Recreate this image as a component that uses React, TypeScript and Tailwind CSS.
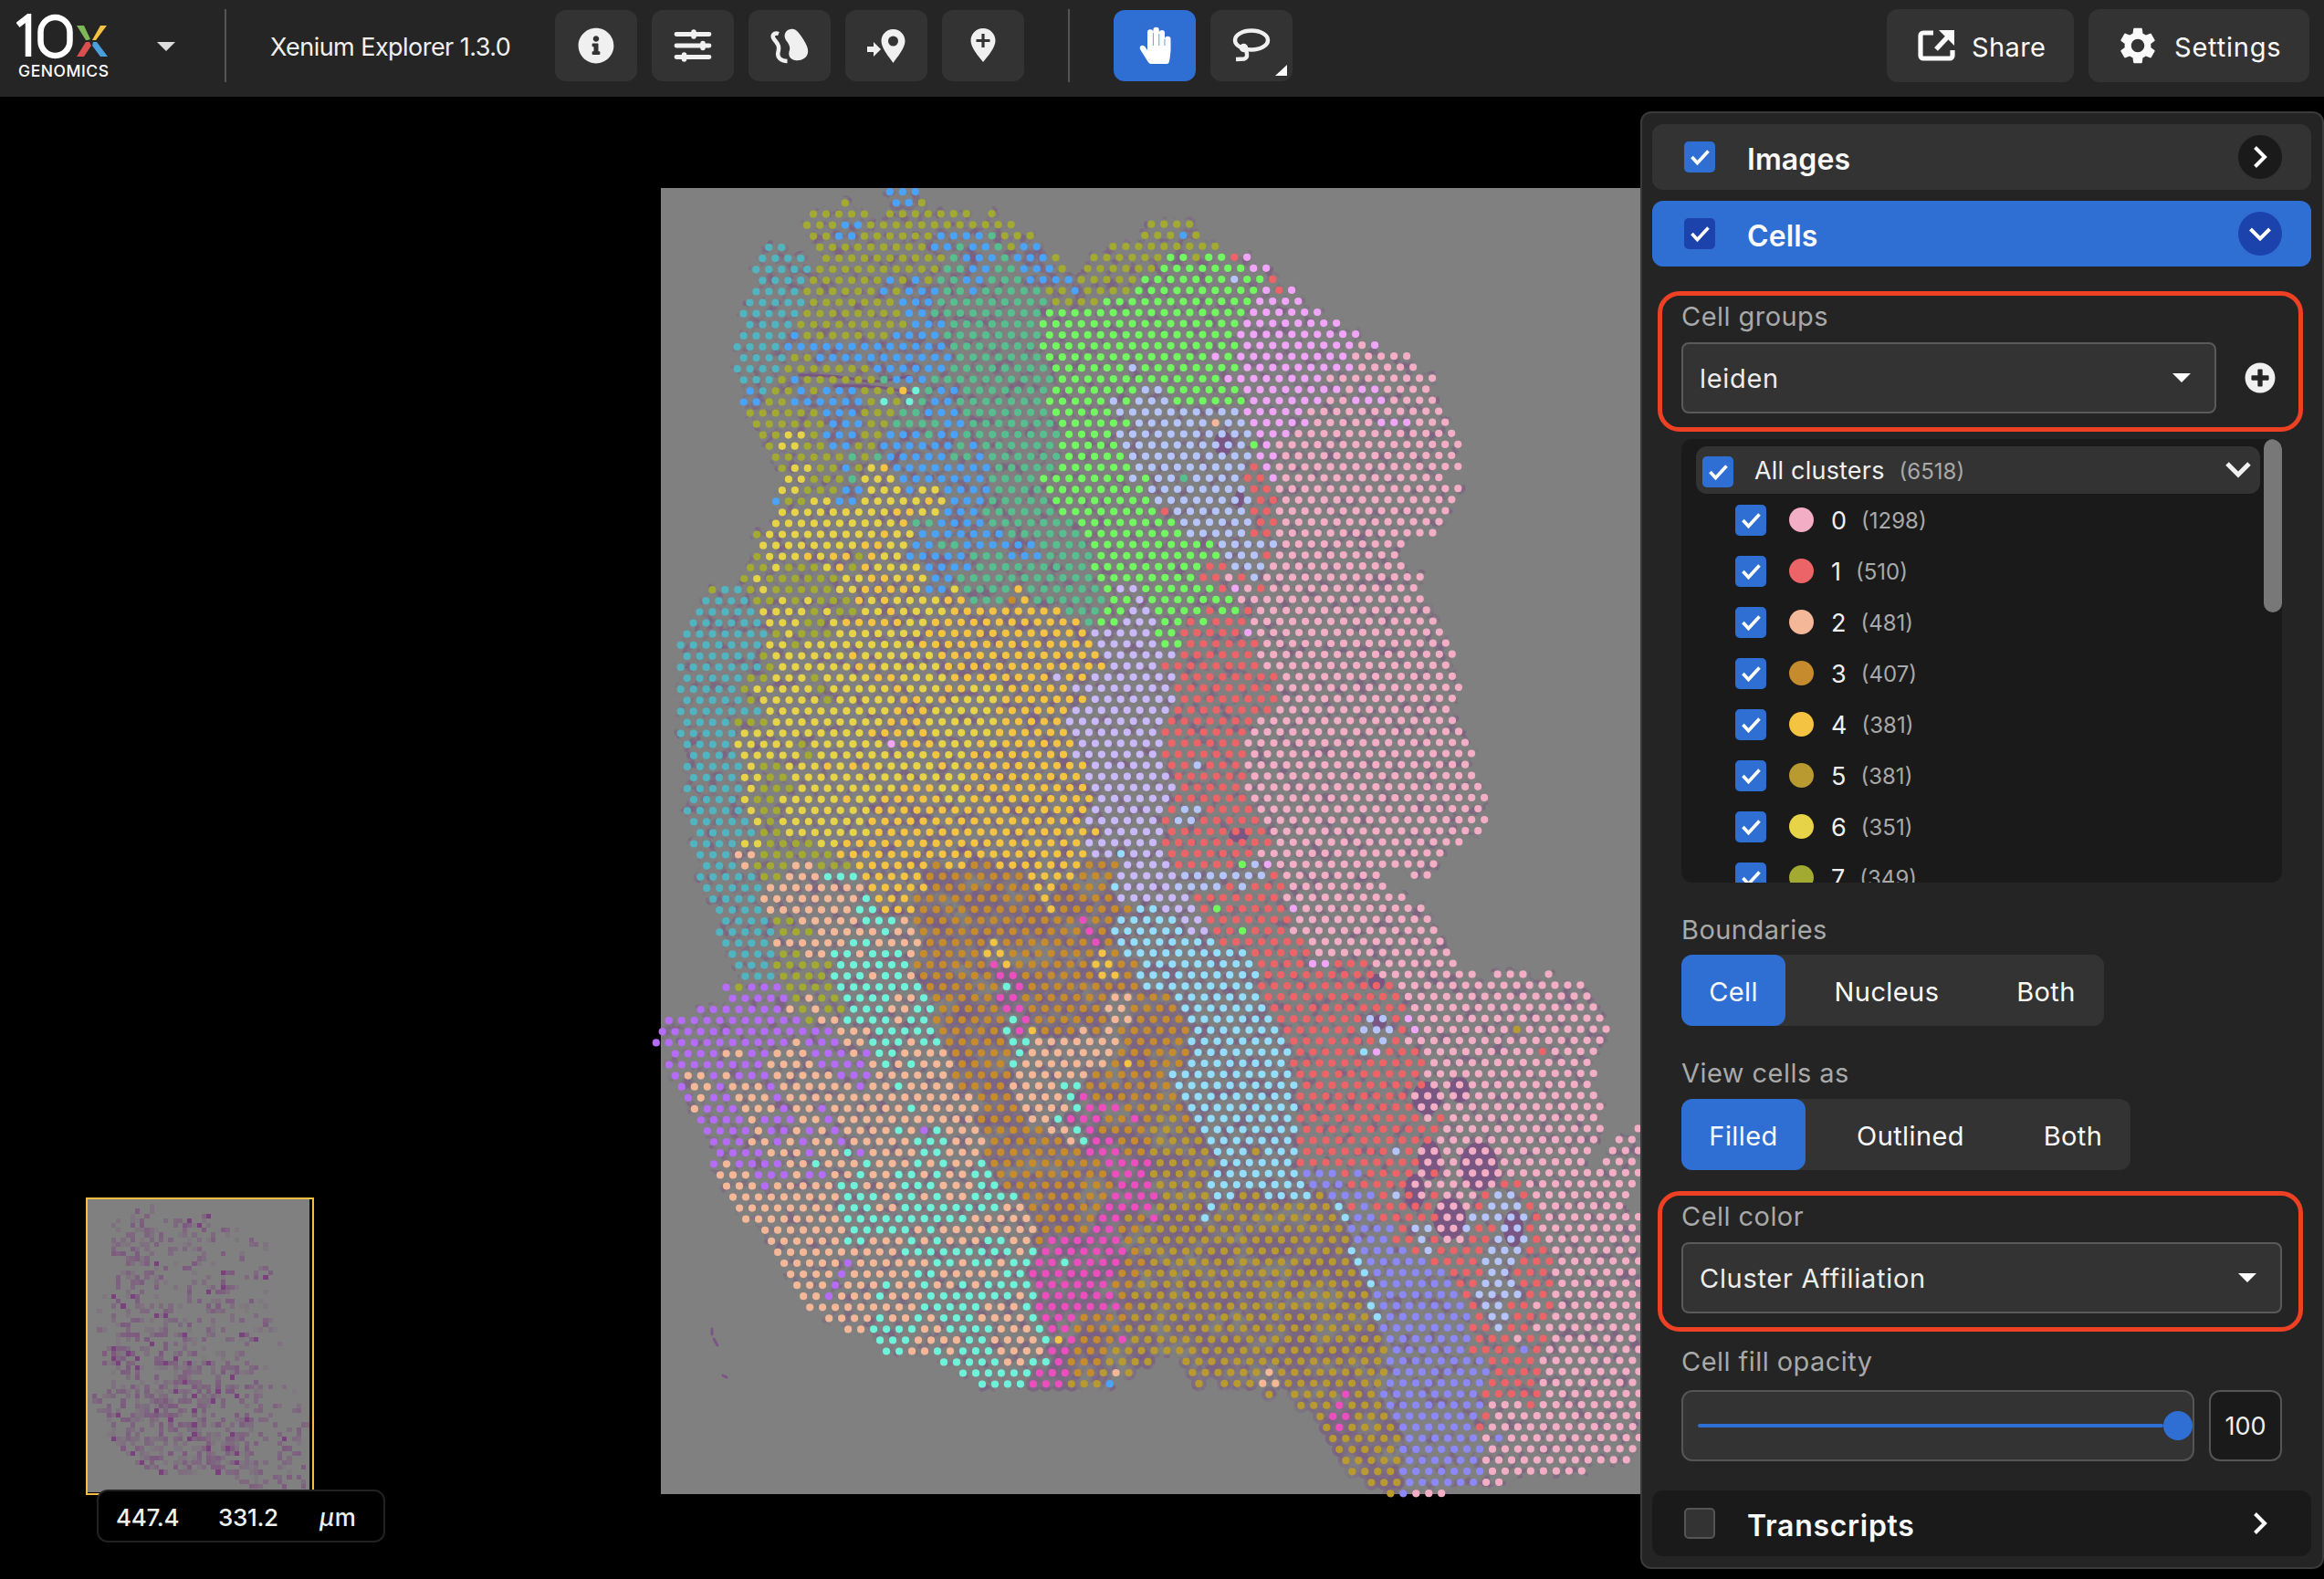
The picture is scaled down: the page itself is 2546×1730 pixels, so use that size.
import React from 'react';
import { FaInfoCircle, FaPlusCircle } from 'react-icons/fa';
import { MdSettings } from 'react-icons/md';

const COLORS: Record<string, string> = {
  P: '#f3aec5', R: '#ed6468', S: '#f4b798', N: '#c58b2d', O: '#f5c342', D: '#b89a30', Y: '#e6d348',
  V: '#a2aa32', L: '#71f75f', G: '#56be8f', C: '#6ef2da', T: '#50b5c0', K: '#94defd', B: '#4aa3fa',
  W: '#b5c5fb', I: '#8c88f8', U: '#c9b8fa', Q: '#b56cf8', M: '#f0a5f8', H: '#ec4fbd',
};

/* Run-length tables of the spot lattice. Each line is one lattice row; every entry is the
   horizontal start of a run (tile units) followed by its cluster letter, "." ends a run. */
type Tile = { ox: number; s: number; first: number; minX: number; maxX: number; rows: string[] };

const TILES: Tile[] = [
  { ox: 700, s: 3, first: 0, minX: 0, maxX: 1197, rows: `824B 930.
677V 700. 845B 929V 950.
573V 760. 825V 1090. 1160V 1175.
552V 678B 762V 1240.
573V 657B 741V 993B 1160G 1202V 1300.
426T 490. 594V 972B 1056G 1098B 1182G 1223V 1265B 1325.
405T 550. 615V 1035G 1077B 1202G 1244B 1370V 1390. 1490V
384T 594V 1014G 1098B 1182G 1265B 1391V 1410. 1475V
405T 573V 825B 867V 909B 951V 993G 1077B 1160G 1286B 1454V
384T 552V 804B 846V 888B 1014G 1098B 1140G 1349V 1433B 1475V
363T 573V 867B 993G 1370V
342T 552V 888B 972G 1349L
363T 531V 909B 1035G 1328L
342T 511B 552V 846B 1014G 1349L
321T 490B 1035G 1328L
342T 511V 594B 1056G 1349L
321T 490V 784B 1035G 1370L
342T 470V 511B 552V 805G 846B 972G 1391L
363B 405T 447V 532B 574V 616B 742V 868O 910C 952G 993B 1077G 1370L
342B 427V 511B 763V 805C 847V 889C 931G 973B 1056G 1349L
365V 616B 742V 868G 952B 1077G 1372L
386V 638B 763V 847G 1015B 1098G 1393L
407V 491Y 574V 616B 742V 826B 931G 994B 1077G 1414L
428V 470Y 553V 638B 721V 805B 1056G 1098B 1140G 1393L
449V 701G 742V 784G 826B 1035G 1119B 1160G 1414L
470V 512Y 595V 680B 721V 763Y 805O 847B 1182G 1393L
491Y 574V 701G 742Y 868B 1161G 1330L
470Y 553V 680B 763Y 889B 931Y 1015B 1182G 1351L
449B 491V 574Y 658B 742Y 952O 994Y 1036B 1161G 1372L
470Y 847O 931Y 1015B 1140G 1393L
449Y 868O 910G 994B 1161G 1456L
386V 428Y 805O 847Y 931B 1224G 1477L
407Y 742O 826Y 910B 994G 1077B 1330G 1490L
386V 428Y 553O 595Y 637O 721V 763O 805Y 889B 1098G 1224B 1350G
365V 449Y 491V 616Y 658O 700V 742O 784Y 952B 1119G 1490L
344V 386Y 428V 680Y 763O 847Y 889O 931Y 973B 1056G
240V 282T 365V 407Y 449V 658Y 742O 910Y 952B 1036Y 1077G 1245O 1287G
220T 386V 470Y 512V 553Y 595V 721O 763Y 805O 847Y 1015O 1098G 1224N 1266O 1308G`.split('\n') },
  { ox: 1200, s: 2.6133, first: 3, minX: 1197, maxX: 1900, rows: `160V 285.
142V 252B 289V 305.
51V 360.
0V 215L 289V 325L 398R 434M 450.
0V 197L 453M 505.
0V 143L 398W 434L 508R 525.
0V 125L 490M 527R 563M 580.
0V 33L 472M 600.
0L 453M 655.
0L 435M 710.
0L 417M 765.
0L 435M 765P 801M 820.
0L 344M 381L 417M 746P 910.
0L 107W 143L 435M 765P 930.
0L 381M 673P 985.
0L 143W 216L 435M 728P 765M 838P 965.
0L 52W 89L 125W 234L 453M 673P 746M 857P 985.
0L 70W 435M 618P 1000.
0L 125W 344S 381W 453M 636P 819M 930P 1020.
0L 70W 472M 582P 1040.
0L 89W 454L 490M 527P 1060.
0L 107W 472M 545P 1040.
0L 125W 454R 490M 527P 1060.
0L 107W 143L 180W 253G 290W 437R 508M 545P 1010.
0L 162W 454R 527P 1060.
0L 180W 472R 545P 1040.
0L 199R 235W 454R 527P 1020.
0L 253W 472R 545P 1005.
0L 271W 454R 527P 985.
0L 364W 545P 895.
0L 381W 490R 527P 880.
0L 326R 400W 510P 895.
0L 308R 382P 418R 455W 491P 950.
0G 35L 71U 145L 363R 400M 437P 473R 510P 930.
0G 53L 126U 162L 418P 950.
0G 35L 108U 180L 327R 363L 437R 473P 970.
0L 89U 199L 272R 309L 345R 455P 985.
0U 181L 254R 437M 473P 1005.
0U 199L 272R 491P 1025.
0O 35U 254R 473P 1040.
0O 53U 199R 491P 1025.
0U 254R 546P 1040.
0U 236R 528P 1060.
0U 254R 546P 1040.`.split('\n') },
  { ox: 730, s: 3, first: 38, minX: 0, maxX: 1197, rows: `108T 318Y 486V 528Y 570V 654Y 738O 780Y 948O 1326G
88T 340Y 466V 550Y 592O 802Y 886O 1389G
67T 361V 403Y 445V 571Y 865O 1410U
46T 340Y 424V 466Y 844O 1431U
67T 319V 361Y 613O 655Y 907O 1452U
46T 340V 382Y 634O 718Y 928O 1473U
67T 277V 361Y 487V 529Y 697O 781Y 949O 1285U 1327O 1410U
46T 256V 298Y 508V 550Y 760O 802Y 928O 1012Y 1138O 1348U
67T 277V 319Y 529V 571Y 781O 865Y 907O 949Y 1117O 1410U
46T 340Y 760O 886Y 1096O 1348U
67T 236V 361Y 739O 865Y 1117O 1327U
46T 256Y 676O 802Y 844O 886Y 1096O 1348U
67T 236Y 446V 488Y 739M 781O 907Y 1033O 1075Y 1117O 1369U
88T 256Y 466V 508Y 886O 928Y 1012O 1348U
67T 277Y 319V 403Y 529O 571Y 613O 697Y 907O 949Y 991O 1410U
88T 256Y 340V 424Y 1012O 1390U
67T 277Y 319V 445Y 781O 907Y 991O 1410U
88T 256Y 298V 382Y 592O 634Y 718O 928Y 1012O 1432U
67T 277Y 319V 403Y 697O 1410U
88T 298Y 340V 382Y 676O 1390U
110T 319V 403Y 697O 1452U`.split('\n') },
  { ox: 1200, s: 3, first: 47, minX: 1197, maxX: 1900, rows: `0U 273R 609P 1175.
0U 252R 546P 1195.
0U 231R 525P 1215.
0U 252R 504P 1235.
0U 231R 525P 1255.
0U 252R 336W 378R 504P 1235.
0U 273R 525P 1255.
0U 294R 504P 1275.
0U 273R 525P 1300.
0U 252R 294W 378R 546P 1275.
0U 231R 273W 357R 567P 1300.
0O 42U 252R 588P 1275.`.split('\n') },
  { ox: 700, s: 2.6133, first: 59, minX: 0, maxX: 1279, rows: `157T 304Y 377V 514Y 587O 1290U 1509R
176T 286S 350V 577O 1300U 1382K 1418U 1520R
194T 304S 341V 450S 514V 632O 852N 888O 962N 1035O 1290N 1400U
176T 359V 432S 541C 650O 834N 1126O 1272N 1382U
194T 377S 669O 834N 1144O 1200N 1364K 1400U
213T 359S 651C 688O 797N 1163O 1185N 1382U
231T 377S 633C 706O 815N 1181O 1217N 1428K 1510U
250T 395V 468S 651C 761S 797N 1272H 1309N 1382K
231T 395V 523S 706C 742S 815N 1290H 1327N 1364K
250T 395S 615C 688S 834N 1017O 1054N 1309H 1346N 1382K
268T 414V 487S 560C 633S 670C 779S 815N 999O 1072N 1327O 1354N 1400K
286T 395V 578C 797N 1017H 1054O 1090N 1309O 1382N 1455K
304T 414V 560C 670S 706C 779S 815N 1035H 1108N 1327O 1400N 1437K
250Q 286V 322Q 432V 578C 834N 1054C 1090H 1127N 1455K
268Q 450V 487S 523V 597C 742S 815C 852N 1035H 1108N 1364S 1437N
176Q 432S 468V 505S 541V 615C 724S 797C 870N 1054H 1127N 1346S 1418N
85Q 487V 523S 597C 742S 779C 852N 1072C 1108H 1145N 1364S 1437N
67Q 578S 688C 870N 1054C 1090H 1127O 1163N 1272S 1309N 1346S 1382N
49Q 452S 487Q 597S 670C 779S 815C 888N 1072C 1145S 1400N
103Q 250S 322Q 395S 505Q 615S 651Q 688C 761S 907N 1090C 1127S 1382N
85Q 377S 523Q 670S 706C 742S 779C 815S 925N 1072C 1108S 1364N 1400O 1437N
103Q 140S 213Q 250S 286Q 395S 578Q 688S 907N 1090S 1309N
121Q 158S 231Q 268S 377Q 414S 633Q 670S 742C 779S 925N 1072S 1217C 1290N
140Q 176S 213Q 286S 395Q 432S 980N 1090S 1236C 1272H 1309N
158S 195Q 304S 414Q 450S 523Q 560S 779C 815S 999N 1108S 1254C 1290H 1400N 1475D
176Q 322S 359Q 468S 541Q 578S 980N 1127S 1200C 1236H 1345N 1418H 1455N 1490D
195Q 341S 377Q 450S 487Q 523S 560Q 597S 742C 779S 815Q 852C 888S 999N 1181S 1254C 1290H 1327N 1475D
213Q 322S 395Q 432S 468Q 505S 578Q 615S 797C 888S 1017N 1236S 1272C 1309H 1382N 1490D
231Q 377S 487Q 523S 597C 633Q 670S 815C 888S 999N 1290H 1400N 1475D
213Q 250S 286Q 432S 505C 541S 651C 688S 797C 834S 870C 907S 980C 1017N 1345H 1490D
231S 341Q 450S 487Q 560S 633C 670S 742C 815S 852C 888S 962C 1035N 1364H 1475D
250S 359Q 395S 578C 651S 761C 870S 980C 1054N 1382H 1490D
268S 597C 706S 742C 815S 852C 888S 962C 1108N 1364H 1510D
286S 578C 688S 761C 1054S 1127N 1345H 1490D
304S 597C 962S 1145N 1327H 1400D 1437N 1475H 1510D
359S 615C 797S 834C 870S 1163N 1309H 1382N 1455D
377S 597C 670S 779C 815S 852C 888S 999C 1072S 1145N 1181H 1400N 1437D
395S 761C 1090S 1127C 1163H 1418N 1455D
414S 597Q 633S 852C 925S 962C 1035S 1072C 1145H 1217C 1254H 1400N 1475D
432S 578Q 615S 797C 870S 1054C 1127H 1382N 1455D
450S 560Q 597S 706C 742S 815C 852S 925C 962S 999C 1145H 1364N 1437D
468S 541Q 578S 688C 724S 834C 1090S 1127C 1163H 1382N 1418D
487S 815C 999S 1108C 1145H 1400N 1437D
541S 688C 724S 797C 834S 870C 980S 1127C 1163H 1272N 1418D
597S 670C 815S 888C 1035S 1145C 1181H 1254N 1400D
688C 797S 944C 1017S 1163C 1200O 1236H 1272N 1382H 1418D
706C 779S 852C 888S 925C 1035S 1181H 1254N 1364D
870C 1054S 1127C 1200H 1236N 1345D 1475.
925C 1145H 1254N 1327D 1364S 1400D 1420.
980C 1127H 1236D 1350B 1365.`.split('\n') },
  { ox: 1280, s: 3, first: 59, minX: 1279, maxX: 1900, rows: `0R 370P 975.
0R 307P 910.
0U 35R 245L 287W 329M 371P 890.
0U 56W 350R 392P 700. 811P 870.
0W 203R 245W 287R 413P 720.
0U 98R 392P 785.
0U 119R 161L 203R 413M 455P 850.
0K 56U 140R 434P 870.
0K 77U 161R 245L 287R 413P 890.
0K 182R 476P 910.
0K 287R 497P 930.
0K 308R 476M 560R 686P 950.
0K 329R 707P 1015. 1085P 1180. 1253P 1270.
0K 308R 770P 1370.
0K 329R 791P 1390.
0N 56K 350R 812P 1415.
0N 77K 371R 665W 749R 791M 833P 1435.
0N 98K 392R 644W 770R 812M 854P 1148D 1190P 1455.
0N 77K 413R 707W 749R 791P 1435.
0N 98K 434R 644K 686M 728R 854P 1232R 1274P 1415.
0N 77K 413R 875P 1395.
0K 434R 854P 1415.
0K 455R 875P 1395.
0N 56K 434R 812P 1415.
0N 77K 455R 833P 1435.
0D 56N 98K 434R 854P 896R 938P 1415.
0D 119K 455R 896P 1435. 1530P
0D 140K 434R 896P 1415. 1485P
0D 161K 287D 329K 455R 749W 791R 833P 1395. 1464P
0D 182K 434R 833P 1370. 1443P
0D 161K 455I 581R 623I 665R 833P 875R 917P
0D 140K 476I 602R 812P 1108R 1190P
0D 161K 245D 329K 497D 539I 707R 749W 791R 833P 875R 917P 1043R 1085W 1169R 1211P 1520.
0D 140K 182D 560K 602R 644I 686R 896P 1022R 1064W 1190R 1232P 1505.
0D 119K 161D 581K 623I 707R 896P 1000W 1211R 1253P
0D 602I 770R 812W 896P 980W 1022R 1106W 1190R 1232P
0D 623I 749R 833W 875R 917P 1000R 1085W 1211R 1253P
0D 602K 644I 812R 854W 896R 1064W 1190R 1274P
0D 623K 665I 875R 1043W 1169R 1274P
0D 644K 686I 935R 1064W 1148R 1274P
0D 665K 707I 955R 1043W 1169R 1290P
0D 686I 980R 1022W 1185R 1274P
0D 665K 707I 1000R 1043W 1127R 1211P 1253R 1295P
0D 686K 720I 1022R 1064W 1148R 1274P
0D 707I 1000R 1085W 1127R 1211P
0D 728I 1015R 1148P 1190R 1274P
0D 749I 1000R 1169I 1211R 1253P
56D 728I 1064R 1232P
77D 329S 371D 749I 1064R 1232P
98D 120. 182D 308S 392D 728I 1064R 1232P
329D 350. 413D 581H 623D 707I 1043R 1232P
434D 560H 602D 728I 1064P 1190R 1232P
497D 539H 623D 749I 1043R 1085P
518D 560H 602D 770I 1022R 1064P
539D 791I 1043P 1085I 1127P
560D 770I 1064P
581D 770I 1043P 1520.
602D 770I 1064P 1380.
665D 790I 1043P 1110.
728D 770I 812P 920.`.split('\n') },
];

const PITCH = 13.97;
const ROW = 12.098;
const TILT = 0.0026;
const X0 = 974.8;
const Y0 = 210.2;

type Spot = { x: number; y: number; k: string };

function buildSpots(): Spot[] {
  const out: Spot[] = [];
  for (const t of TILES) {
    t.rows.forEach((line, i) => {
      const r = t.first + i;
      const runs = line.trim().split(' ').map((e) => ({ at: parseFloat(e), k: e[e.length - 1] }));
      for (let c = -22; c < 62; c++) {
        const x = X0 + PITCH * (c + (r % 2 ? 0.5 : 0)) + TILT * ROW * r;
        if (x < t.minX || x >= t.maxX || x > 1800) continue;
        const lx = (x - t.ox) * t.s;
        const slack = PITCH * t.s * 0.4;
        let k = '.';
        for (const run of runs) if (run.at <= lx + (run.k === '.' ? 0 : slack)) k = run.k;
        if (k === '.') continue;
        out.push({ x, y: Y0 + ROW * r - TILT * (x - X0), k });
      }
    });
  }
  return out;
}

const SPOTS = buildSpots();
const pathOf = (spots: Spot[]) =>
  spots.map((s) => `M${(s.x - 724).toFixed(1)} ${(s.y - 206).toFixed(1)}h.01`).join('');
const DENSE = 'NDH';
const TISSUE = pathOf(SPOTS);
const DENSE_TISSUE = pathOf(SPOTS.filter((s) => DENSE.includes(s.k)));
const MID_TISSUE = pathOf(SPOTS.filter((s) => 'KBO'.includes(s.k)));
const LAYERS = Object.keys(COLORS).map((k) => ({ k, d: pathOf(SPOTS.filter((s) => s.k === k)) }));

const BLOBS = [
  [839, 997, 16, 18], [875, 988, 11, 14], [842, 1065, 13, 22], [826, 1100, 11, 20], [896, 1072, 21, 27],
  [864, 1129, 18, 23], [934, 1140, 11, 20], [616, 280, 10, 14], [633, 709, 11, 8], [784, 870, 9, 9],
  [634, 340, 5, 10], [787, 914, 8, 8],
];

function TissueMap() {
  return (
    <svg width="1073" height="1431" viewBox="0 0 1073 1431" className="block overflow-visible" fill="none" strokeLinecap="round">
      <defs>
        <filter id="haze" x="0" y="0" width="1" height="1" filterUnits="objectBoundingBox" colorInterpolationFilters="sRGB">
          <feTurbulence type="fractalNoise" baseFrequency="0.08" numOctaves="4" seed="7" result="n" />
          <feColorMatrix in="n" type="matrix" values="0 0 0 0 0.48  0 0 0 0 0.36  0 0 0 0 0.51  5 0 0 0 -2.75" result="c" />
          <feComposite in="c" in2="SourceAlpha" operator="in" />
        </filter>
        <filter id="haze-mid" x="0" y="0" width="1" height="1" filterUnits="objectBoundingBox" colorInterpolationFilters="sRGB">
          <feTurbulence type="fractalNoise" baseFrequency="0.06" numOctaves="4" seed="21" result="n" />
          <feColorMatrix in="n" type="matrix" values="0 0 0 0 0.48  0 0 0 0 0.34  0 0 0 0 0.51  5 0 0 0 -2.6" result="c" />
          <feComposite in="c" in2="SourceAlpha" operator="in" />
        </filter>
        <filter id="haze-dense" x="0" y="0" width="1" height="1" filterUnits="objectBoundingBox" colorInterpolationFilters="sRGB">
          <feTurbulence type="fractalNoise" baseFrequency="0.035" numOctaves="4" seed="4" result="n" />
          <feColorMatrix in="n" type="matrix" values="0 0 0 0 0.48  0 0 0 0 0.36  0 0 0 0 0.51  3 0 0 0 -0.9" result="c" />
          <feComposite in="c" in2="SourceAlpha" operator="in" />
        </filter>
        <clipPath id="slide"><rect width="1073" height="1431" /></clipPath>
      </defs>
      <rect width="1073" height="1431" fill="#808080" />
      <g clipPath="url(#slide)">
        <path d={TISSUE} stroke="#fff" strokeWidth="16.500" filter="url(#haze)" opacity="0.72" />
        <path d={MID_TISSUE} stroke="#fff" strokeWidth="17" filter="url(#haze-mid)" opacity="0.55" />
        <path d={DENSE_TISSUE} stroke="#fff" strokeWidth="17" filter="url(#haze-dense)" opacity="0.7" />
        {BLOBS.map(([x, y, rx, ry], i) => (
          <ellipse key={i} cx={x} cy={y} rx={rx} ry={ry} fill="#7a5682" />
        ))}
        <path d="M56 1250v6M58 1261l4 7M68 1301l4 2" stroke="#7a5682" strokeWidth="3" />
        <path d="M152 205q40 0 62 5t58-4M190 217q50-2 84 8" stroke="#7a5682" strokeWidth="3" />
      </g>
      {LAYERS.map((l) => (
        <path key={l.k} d={l.d} stroke={COLORS[l.k]} strokeWidth="8.200" />
      ))}
    </svg>
  );
}

const noise = (a: number, b: number) => {
  const v = Math.sin(a * 127.1 + b * 311.7) * 43758.5453;
  return v - Math.floor(v);
};

const MINI: { x: number; y: number; o: number }[] = [];
for (let j = 0; j < 62; j++) {
  for (let i = 0; i < 47; i++) {
    const mx = 724 + (i - 0.8) * 23;
    const my = 206 + (j - 0.8) * 23.1;
    const near = SPOTS.find((s) => Math.abs(s.x - mx) < 10 && Math.abs(s.y - my) < 9);
    if (!near) continue;
    const dense = DENSE.includes(near.k) ? 0.68 : 'SCB'.includes(near.k) ? 0.48 : 'QVYWR'.includes(near.k) ? 0.4 : near.k === 'P' ? 0.18 : 0.26;
    const n = noise(i + 1, j + 1);
    if (n < dense) {
      const m = noise(j + 9, i + 4);
      MINI.push({ x: i * 5.2, y: j * 5.2, o: m > 0.93 ? 0.9 : 0.08 + m * 0.5 });
    }
  }
}

function Minimap() {
  return (
    <div className="h-[326px] w-[250px] border-2 border-[#f5bd41] bg-black">
      <svg width="243" height="321" viewBox="0 0 243 321" className="block" shapeRendering="crispEdges">
        <rect width="243" height="321" fill="#808080" />
        {MINI.map((c, i) => (
          <rect key={i} x={c.x} y={c.y} width="5.200" height="5.200" fill="#7a3a7e" opacity={c.o} />
        ))}
      </svg>
    </div>
  );
}

function Caret({ className = '' }: { className?: string }) {
  return (
    <svg width="20" height="10" viewBox="0 0 20 10" className={className}><path d="M0 0h20L10 10z" fill="currentColor" /></svg>
  );
}

function Check() {
  return (
    <svg width="34" height="34" viewBox="0 0 34 34" fill="none" stroke="#fff" strokeWidth="3.600" className="block">
      <path d="M8.500 17l6 6.500L26.500 10.500" />
    </svg>
  );
}

function CheckBox({ className = '' }: { className?: string }) {
  return <span className={`block size-[34px] shrink-0 rounded-[5px] ${className}`}><Check /></span>;
}

function Chevron({ dir }: { dir: 'right' | 'down' }) {
  return (
    <svg width="48" height="48" viewBox="0 0 48 48" fill="none" stroke="#fff" strokeWidth="4" className="block">
      <path d={dir === 'right' ? 'M18.5 13.5L29 24L18.5 34.5' : 'M13.5 19L24 29.5L34.5 19'} />
    </svg>
  );
}

function ToolButton({ active, children }: { active?: boolean; children: React.ReactNode }) {
  return (
    <button className={`relative flex h-[78px] w-[90px] items-center justify-center rounded-xl ${active ? 'bg-[#2f6fd3]' : 'bg-[#333333]'}`}>
      {children}
    </button>
  );
}

function Logo() {
  return (
    <svg width="102" height="72" viewBox="0 0 102 72" className="block">
      <g fill="none" stroke="#fff" strokeWidth="6.500">
        <path d="M1.500 12.500L13 3.500V47" />
        <rect x="26.500" y="4" width="32" height="42" rx="16" />
      </g>
      <path d="M66 13h8l7 15-3 1h-2z" fill="#7fb957" />
      <path d="M92 13h7L87 29h-4z" fill="#f5c342" />
      <path d="M76 31h4l2 4-8 12h-8z" fill="#d9504f" />
      <path d="M84 31h4l12 16h-8l-9-12z" fill="#4a9fdc" />
      <text x="2" y="69" fill="#fff" fontFamily="Inter, sans-serif" fontWeight="500" fontSize="17.500" textLength="99">GENOMICS</text>
    </svg>
  );
}

function Header() {
  return (
    <header className="flex h-[106px] shrink-0 items-start bg-[#252525]">
      <div className="mt-[15px] ml-[18px] w-[102px]"><Logo /></div>
      <Caret className="mt-[46px] ml-[52px] text-[#dddddd]" />
      <div className="mt-2.5 ml-[54px] h-20 w-[2px] bg-[#555555]" />
      <div className="mt-8 ml-[48px] w-[312px] text-[27px] leading-10 tracking-[-0.55px] whitespace-nowrap text-[#f0f0f0]">Xenium Explorer 1.3.0</div>
      <div className="mt-[11px] flex gap-4 text-[#f0f0f0]">
        <ToolButton><FaInfoCircle size={40} /></ToolButton>
        <ToolButton>
          <svg width="42" height="36" viewBox="0 0 42 36" fill="none" stroke="currentColor" strokeLinecap="round" strokeWidth="4.800">
            <path d="M3 5.500h36M3 18h36M3 30.500h36" /><path d="M22 3v5M32 15.500v5M11.500 28v5" strokeWidth="5.500" />
          </svg>
        </ToolButton>
        <ToolButton>
          <svg width="42" height="40" viewBox="0 0 42 40" fill="none">
            <path d="M22 2c6-2 10 5 14 11 3 5 6 10 5 15-1 6-8 9-14 8-6-1-8-6-6-11 1-4-1-7-4-11-3-5-1-11 5-12z" fill="currentColor" />
            <path d="M9 7C4 5 1 9 4 13c5 6 6 8 4.500 14-1.500 6 3 10 10 10" stroke="currentColor" strokeWidth="4.500" />
          </svg>
        </ToolButton>
        <ToolButton>
          <svg width="42" height="38" viewBox="0 0 42 38" fill="currentColor">
            <path d="M28.500 1C21 1 15.500 7 15.500 14c0 8 9 18 13 24 4-6 13-16 13-24 0-7-5.500-13-13-13zm0 7.500a5.500 5.500 0 1 1 0 11 5.500 5.500 0 0 1 0-11z" fillRule="evenodd" />
            <path d="M0 20h7v-5l8 8-8 8v-5H0z" />
          </svg>
        </ToolButton>
        <ToolButton>
          <svg width="28" height="38" viewBox="0 0 28 38">
            <path d="M14 0C6.500 0 .5 6 .5 13.500.5 21 9 31 14 37c5-6 13.500-16 13.500-23.500C27.500 6 21.500 0 14 0z" fill="currentColor" />
            <path d="M14 6v15M6.500 13.500h15" stroke="#333" strokeWidth="3.200" />
          </svg>
        </ToolButton>
      </div>
      <div className="mt-2.5 ml-[48px] h-20 w-[2px] bg-[#555555]" />
      <div className="mt-[11px] ml-[48px] flex gap-4 text-white">
        <ToolButton active>
          <svg width="36" height="42" viewBox="0 0 36 42" fill="currentColor" className="ml-0.5">
            <path d="M9 26V6.500a3.200 3.200 0 0 1 6.400 0V4a3.200 3.200 0 0 1 6.400 0v3a3.100 3.100 0 0 1 6.200 0v7a3.100 3.100 0 0 1 6.500 0c0 10 .5 14-1.500 24-.4 2-1 3-3 3H13c-1.500 0-2.500-1-3.500-2.500L1.300 25.500c-2-4 2-6.500 5-3.500z" />
            <path d="M15.400 7v14M21.800 8v13M28 14v7" stroke="#2f6fd3" strokeWidth="0.700" />
          </svg>
        </ToolButton>
        <ToolButton>
          <svg width="42" height="38" viewBox="0 0 42 38" fill="none" stroke="#f0f0f0" strokeWidth="4.500">
            <ellipse cx="21" cy="13" rx="18" ry="10.500" />
            <path d="M15 24q3 8-2 9.500L4 34" /><circle cx="12.500" cy="21.500" r="2.500" fill="#f0f0f0" />
          </svg>
          <svg width="13" height="12" viewBox="0 0 13 12" className="absolute right-1.5 bottom-1.5"><path d="M13 0v12H0z" fill="#fff" /></svg>
        </ToolButton>
      </div>
      <div className="mt-2.5 mr-4 ml-auto flex gap-4 text-[29px] text-[#fafafa]">
        <button className="flex h-20 w-[205px] items-center rounded-xl bg-[#333333] pl-[34px]">
          <svg width="41" height="36" viewBox="0 0 41 36" fill="none" stroke="currentColor" strokeWidth="5.200">
            <path d="M17 4H6a3 3 0 0 0-3 3v22a3 3 0 0 0 3 3h29a3 3 0 0 0 3-3v-6" />
            <path d="M20 22L35 6" /><path d="M23 1h17v17z" fill="currentColor" stroke="none" />
          </svg>
          <span className="mt-[3px] ml-[18px] tracking-[0.4px]">Share</span>
        </button>
        <button className="flex h-20 w-[242px] items-center rounded-xl bg-[#333333] pl-[30px]">
          <MdSettings size={48} />
          <span className="mt-[3px] ml-[16px] tracking-[0.8px]">Settings</span>
        </button>
      </div>
    </header>
  );
}

function SectionRow({ title, tone }: { title: string; tone: 'open' | 'on' | 'off' }) {
  const bg = tone === 'open' ? 'bg-[#2f6fd3]' : tone === 'on' ? 'bg-[#333333]' : 'bg-[#1a1a1a]';
  return (
    <div className={`flex h-[72px] w-[722px] shrink-0 items-center rounded-xl pr-8 pl-[35px] ${bg}`}>
      {tone === 'off'
        ? <span className="block size-[34px] rounded-[5px] border-2 border-[#555555] bg-[#333333]" />
        : <CheckBox className={tone === 'open' ? 'bg-[#1c42ac]' : 'bg-[#2f6fd3]'} />}
      <span className={`mt-1.5 ml-[35px] text-[32px] font-semibold text-[#fafafa] ${tone === 'off' ? 'tracking-[0.7px]' : 'tracking-[0.1px]'}`}>{title}</span>
      <span className={`ml-auto block size-12 rounded-full ${tone === 'open' ? 'bg-[#1c42ac]' : 'bg-[#1a1a1a]'}`}>
        <Chevron dir={tone === 'open' ? 'down' : 'right'} />
      </span>
    </div>
  );
}

const Label = ({ children }: { children: React.ReactNode }) => (
  <div className="text-[29px] leading-9 tracking-[0.45px] text-[#a9a9a9]">{children}</div>
);

const Outline = () => (
  <div className="pointer-events-none absolute -top-[10px] -left-[26px] h-[154px] w-[707px] rounded-[24px] border-[5px] border-[#ee4022]" />
);

function Select({ value, className }: { value: string; className: string }) {
  return (
    <div className={`flex h-[78px] items-center justify-between rounded-lg border-2 border-[#5a5a5a] bg-[#333333] pr-[26px] pl-[18px] ${className}`}>
      <span className="mt-0.5 text-[29px] tracking-[0.7px] text-[#ededed]">{value}</span>
      <Caret className="text-white" />
    </div>
  );
}

const CLUSTERS = [
  ['0', 1298, '#f3aec5'], ['1', 510, '#ed6468'], ['2', 481, '#f4b798'], ['3', 407, '#c58b2d'],
  ['4', 381, '#f5c342'], ['5', 381, '#b89a30'], ['6', 351, '#e6d348'], ['7', 349, '#a2aa32'],
] as const;

function ClusterList() {
  return (
    <div className="mt-[28px] flex h-[486px] w-[658px] shrink-0 items-start overflow-hidden rounded-xl bg-[#1a1a1a]">
      <div className="w-[638px] pt-2 pl-4">
        <div className="flex h-[52px] w-[618px] items-center rounded-xl bg-[#333333] pl-[7px]">
          <CheckBox className="mt-1 bg-[#2f6fd3]" />
          <span className="mt-0.5 ml-[23px] text-[27px] tracking-[0.2px] text-[#f0f0f0]">All clusters</span>
          <span className="mt-1 ml-4 text-[24px] text-[#a9a9a9]">(6518)</span>
          <svg width="28" height="20" viewBox="0 0 28 20" fill="none" stroke="#f0f0f0" strokeWidth="5" className="mr-2.5 ml-auto"><path d="M2 3l12 12L26 3" /></svg>
        </div>
        {CLUSTERS.map(([name, n, color]) => (
          <div key={name} className="flex h-14 items-center pl-[43px]">
            <CheckBox className="mt-0.5 bg-[#2f6fd3]" />
            <span className="ml-[25px] size-[27px] rounded-full" style={{ background: color }} />
            <span className="mt-1 ml-[19px] text-[27px] text-[#f0f0f0]">{name}</span>
            <span className="mt-1 ml-4 text-[24px] text-[#a9a9a9]">({n})</span>
          </div>
        ))}
      </div>
      <div className="h-[190px] w-5 rounded-full bg-[#787878]" />
    </div>
  );
}

function Segmented({ items }: { items: [string, string][] }) {
  return (
    <div className="flex h-[78px] w-fit rounded-xl bg-[#333333] text-[29px] tracking-[0.4px] text-[#fafafa]">
      {items.map(([t, w], i) => (
        <button key={t} className={`flex items-center justify-center rounded-xl pt-1 ${w} ${i === 0 ? 'bg-[#2f6fd3]' : ''}`}>{t}</button>
      ))}
    </div>
  );
}

function Panel() {
  return (
    <aside className="mt-4 flex h-[1597px] w-[749px] shrink-0 flex-col rounded-xl border-2 border-[#3a3a3a] bg-[#242424] px-[11px] pt-3">
      <SectionRow title="Images" tone="on" />
      <div className="h-3 shrink-0" />
      <SectionRow title="Cells" tone="open" />
      <div className="flex flex-col pl-8">
        <div className="relative mt-[37px]">
          <Outline />
          <Label>Cell groups</Label>
          <div className="mt-2.5 flex items-center">
            <Select value="leiden" className="w-[586px]" />
            <FaPlusCircle size={34} className="ml-[31px] text-[#f0f0f0]" />
          </div>
        </div>
        <ClusterList />
        <div className="mt-[34px]"><Label>Boundaries</Label></div>
        <div className="mt-[9px]"><Segmented items={[['Cell', 'w-[114px]'], ['Nucleus', 'w-[222px]'], ['Both', 'w-[127px]']]} /></div>
        <div className="mt-[34px]"><Label>View cells as</Label></div>
        <div className="mt-[10px]"><Segmented items={[['Filled', 'w-[136px]'], ['Outlined', 'w-[230px]'], ['Both', 'w-[126px]']]} /></div>
        <div className="relative mt-[33px]">
          <Outline />
          <Label>Cell color</Label>
          <Select value="Cluster Affiliation" className="mt-2.5 w-[658px]" />
        </div>
        <div className="mt-[35px]"><Label>Cell fill opacity</Label></div>
        <div className="mt-[13px] flex gap-4">
          <div className="flex h-[78px] w-[562px] items-center rounded-xl border-2 border-[#555555] bg-[#333333] pl-4">
            <div className="h-1 w-[510px] rounded-full bg-[#2f6fd3]" />
            <div className="size-8 rounded-full bg-[#2f6fd3]" />
          </div>
          <div className="flex h-[78px] w-20 items-center justify-center rounded-xl border-2 border-[#555555] bg-[#1a1a1a] pt-0.5 text-[27px] text-[#ededed]">100</div>
        </div>
      </div>
      <div className="mt-8"><SectionRow title="Transcripts" tone="off" /></div>
    </aside>
  );
}

export default function App() {
  return (
    <div className="flex h-[1730px] w-[2546px] flex-col overflow-hidden bg-black font-['Inter',sans-serif]">
      <Header />
      <main className="flex min-h-0 flex-1">
        <section className="relative w-[1797px] shrink-0 overflow-hidden pt-[100px] pl-[724px]">
          <TissueMap />
          <div className="absolute top-[1206px] left-[94px]"><Minimap /></div>
          <div className="absolute top-[1526px] left-[106px] flex h-[58px] w-[316px] items-center rounded-xl border-2 border-[#222222] bg-black pt-0.5 text-[26px] font-medium tracking-[-0.3px] text-[#f0f0f0]">
            <span className="ml-[19px] w-[112px]">447.4</span>
            <span className="w-[111px]">331.2</span>
            <span className="tracking-[1px]"><i>μ</i>m</span>
          </div>
        </section>
        <Panel />
      </main>
    </div>
  );
}
